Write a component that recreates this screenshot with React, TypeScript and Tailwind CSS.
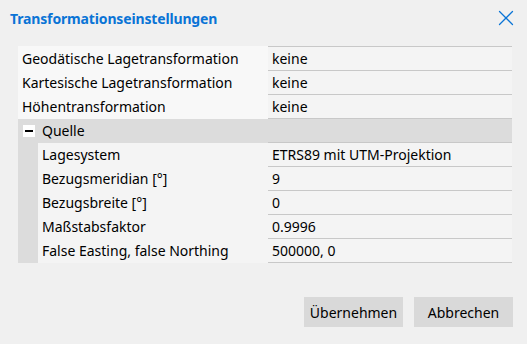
import { X } from "lucide-react";

const topRows = [
    { label: "Geodätische Lagetransformation", value: "keine" },
    { label: "Kartesische Lagetransformation", value: "keine" },
    { label: "Höhentransformation", value: "keine" },
];

const sourceRows = [
    { label: "Lagesystem", value: "ETRS89 mit UTM-Projektion" },
    { label: "Bezugsmeridian [°]", value: "9" },
    { label: "Bezugsbreite [°]", value: "0" },
    { label: "Maßstabsfaktor", value: "0.9996" },
    { label: "False Easting, false Northing", value: "500000, 0" },
];

const App = () => {
    return (
        <div
            className="w-[527px] h-[344px] bg-[#f0f0f0] text-black flex flex-col"
            style={{ fontFamily: '"Noto Sans", "Open Sans", sans-serif' }}
        >
            <div className="flex items-center justify-between h-[36px] pl-[10px] pr-[8px]">
                <h1 className="text-[#0a74d6] font-bold text-[14px] tracking-[-0.15px]">Transformationseinstellungen</h1>
                <X className="w-[26px] h-[26px] text-[#0a74d6]" strokeWidth={1.15} />
            </div>

            <div className="ml-[18px] mt-[10px] w-[494px] flex flex-col text-[14px] leading-[18px]">
                {topRows.map((row, i) => (
                    <div key={row.label} className={`grid grid-cols-[250px_244px] ${i === 0 ? "h-[25px]" : "h-[24px]"}`}>
                        <div className="bg-[#f8f8f8] flex items-center pl-[4px]">{row.label}</div>
                        <div
                            className={`bg-[#f4f4f4] flex items-center pl-[4px] border-b border-[#c8c8c8] ${i === 0 ? "border-t" : ""}`}
                        >
                            {row.value}
                        </div>
                    </div>
                ))}

                <div className="grid grid-cols-[250px_244px] h-[24px] bg-[#dcdcdc]">
                    <div className="flex items-center pl-[5px] gap-[7px]">
                        <span className="w-[12px] h-[12px] bg-white flex items-center justify-center">
                            <span className="w-[8px] h-[2px] bg-black" />
                        </span>
                        <span>Quelle</span>
                    </div>
                    <div className="border-b border-[#c8c8c8]" />
                </div>

                {sourceRows.map((row) => (
                    <div key={row.label} className="grid grid-cols-[20px_230px_244px] h-[24px]">
                        <div className="bg-[#dcdcdc]" />
                        <div className="bg-[#f4f4f4] flex items-center pl-[4px]">{row.label}</div>
                        <div className="bg-[#f4f4f4] flex items-center pl-[4px] border-b border-[#c8c8c8]">{row.value}</div>
                    </div>
                ))}
            </div>

            <div className="flex justify-end gap-[11px] pr-[14px] mt-[34px]">
                <button className="w-[99px] h-[30px] bg-[#d9d9d9] text-[14px]">Übernehmen</button>
                <button className="w-[99px] h-[30px] bg-[#d9d9d9] text-[14px]">Abbrechen</button>
            </div>
        </div>
    );
};

export default App;
